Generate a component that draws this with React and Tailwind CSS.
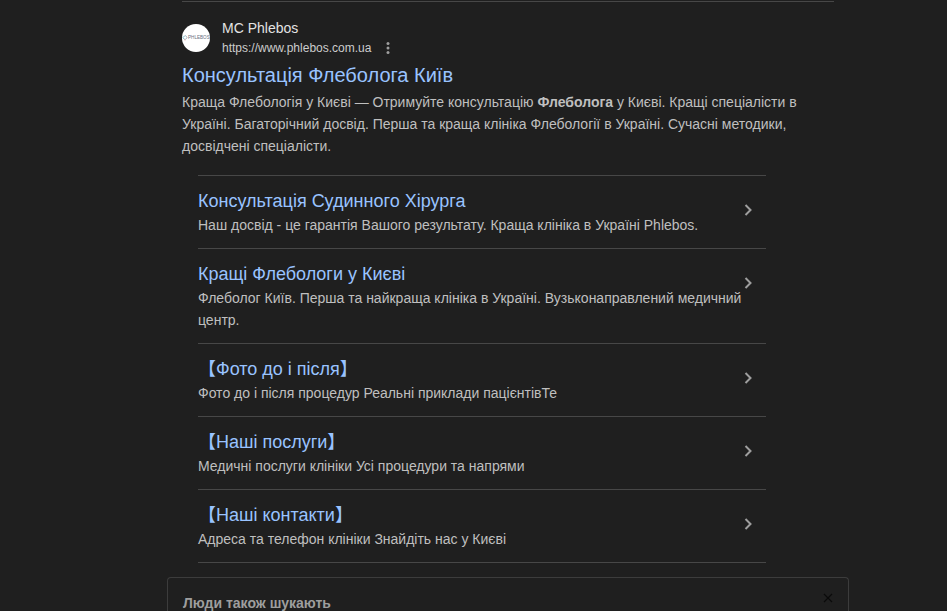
import React, { useState } from 'react';

const siteLinks = [
  {
    title: 'Консультація Судинного Хірурга',
    text: 'Наш досвід - це гарантія Вашого результату. Краща клініка в Україні Phlebos.',
  },
  {
    title: 'Кращі Флебологи у Києві',
    text: 'Флеболог Київ. Перша та найкраща клініка в Україні. Вузьконаправлений медичний центр.',
  },
  {
    title: '【Фото до і після】',
    text: 'Фото до і після процедур Реальні приклади пацієнтівТе',
  },
  {
    title: '【Наші послуги】',
    text: 'Медичні послуги клініки Усі процедури та напрями',
  },
  {
    title: '【Наші контакти】',
    text: 'Адреса та телефон клініки Знайдіть нас у Києві',
  },
];

const SiteLogo = () => (
  <svg viewBox="0 0 28 28" className="h-7 w-7 shrink-0" aria-hidden="true">
    <circle cx="14" cy="14" r="14" fill="#fff" />
    <path d="M3 11.5 L1 13.5 L2.5 15.5" fill="none" stroke="#6fb3c4" strokeWidth="1" />
    <path d="M3.5 11.5 L5 13.5 L3.5 15.5" fill="none" stroke="#8a9aa8" strokeWidth="0.8" />
    <circle cx="3" cy="15.8" r="0.6" fill="#d98a8a" />
    <text x="6" y="15" fontSize="4.6" fill="#6b7280" fontFamily="Liberation Sans, sans-serif">
      PHLEBOS
    </text>
  </svg>
);

const SiteLink = ({ title, text }) => (
  <li className="flex border-b border-[#474747] pt-3 pb-3">
    <div className="min-w-0 flex-1">
      <h3 className="text-lg leading-[26px]">
        <a href="#" className="text-[#99c3ff] hover:underline">{title}</a>
      </h3>
      <p className="text-sm leading-[22px]">{text}</p>
    </div>
    <svg viewBox="0 0 12 12" className="mt-4 mr-3 h-3 w-3 shrink-0" aria-hidden="true">
      <path d="M3.5 1 L8.5 6 L3.5 11" fill="none" stroke="#9e9e9e" strokeWidth="2" />
    </svg>
  </li>
);

const App = () => {
  const [showRelated, setShowRelated] = useState(true);

  return (
    <div className="h-screen overflow-hidden bg-[#1f1f1f] pt-px pl-[167px] font-['Liberation_Sans','Noto_Sans_CJK_JP',sans-serif] text-[#bfbfbf]">
      <main className="max-w-[682px]">
        <article className="mx-[15px] border-t border-[#474747] pt-4">
          {/* Site name and address */}
          <div className="flex items-center gap-3">
            <SiteLogo />
            <div>
              <div className="text-sm leading-5 text-[#e3e3e3]">MC Phlebos</div>
              <div className="flex items-center gap-3 text-xs leading-5">
                <cite className="text-[#cccccc] not-italic">https://www.phlebos.com.ua</cite>
                <button type="button" aria-label="Про цей результат" className="px-[3px]">
                  <svg viewBox="0 0 4 12" className="h-3 w-1" fill="#9e9e9e">
                    <circle cx="2" cy="1.5" r="1.5" />
                    <circle cx="2" cy="6" r="1.5" />
                    <circle cx="2" cy="10.5" r="1.5" />
                  </svg>
                </button>
              </div>
            </div>
          </div>

          <h2 className="mt-[2px] mb-px text-xl leading-[30px]">
            <a href="#" className="text-[#99c3ff] hover:underline">Консультація Флеболога Київ</a>
          </h2>
          <p className="max-w-[624px] text-sm leading-[22px]">
            Краща Флебологія у Києві — Отримуйте консультацію <b>Флеболога</b> у Києві. Кращі спеціалісти в
            Україні. Багаторічний досвід. Перша та краща клініка Флебології в Україні. Сучасні методики,
            досвідчені спеціалісти.
          </p>

          {/* Site links */}
          <ul className="mt-[18px] ml-4 max-w-[568px] border-t border-[#474747]">
            {siteLinks.map((link) => (
              <SiteLink key={link.title} title={link.title} text={link.text} />
            ))}
          </ul>
        </article>

        {/* Related searches */}
        {showRelated && (
          <section className="mt-[14px] min-h-12 rounded-t-sm border border-b-0 border-[#3c3c3c] px-[15px] pt-[15px]">
            <div className="flex items-start justify-between">
              <h4 className="text-sm leading-5 font-bold text-[#9e9e9e]">Люди також шукають</h4>
              <button type="button" aria-label="Закрити" onClick={() => setShowRelated(false)}>
                <svg viewBox="0 0 10 10" className="h-2.5 w-2.5">
                  <path d="M1 1 L9 9 M9 1 L1 9" stroke="#0a0a0a" strokeWidth="1.2" />
                </svg>
              </button>
            </div>
          </section>
        )}
      </main>
    </div>
  );
};

export default App;
